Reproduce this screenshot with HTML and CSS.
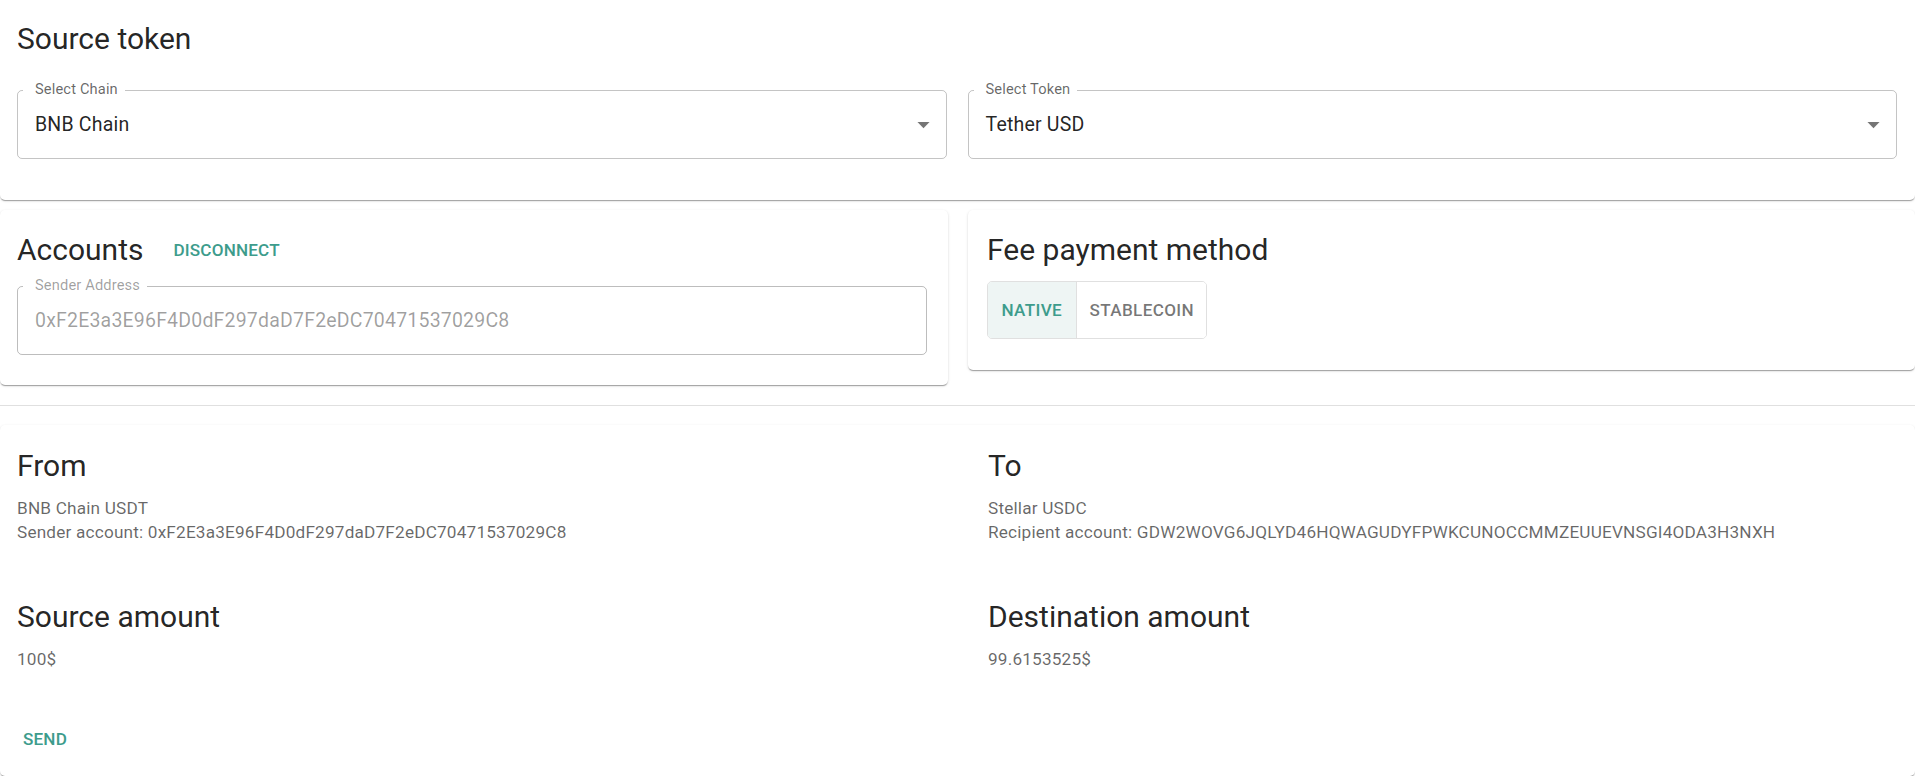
FILE: index.html
```html
<!DOCTYPE html>
<html lang="en">
<head>
<meta charset="utf-8">
<title>Bridge</title>
<link rel="stylesheet" href="styles.css">
</head>
<body>
<div class="page">
  <section class="card card-top">
    <h2 class="h5 title-top">Source token</h2>
    <div class="two-col">
      <div class="field">
        <span class="field-label">Select Chain</span>
        <span class="field-value">BNB Chain</span>
        <svg class="arrow" viewBox="0 0 24 24" width="29" height="29"><path d="M7 10l5 5 5-5z"/></svg>
      </div>
      <div class="field">
        <span class="field-label">Select Token</span>
        <span class="field-value">Tether USD</span>
        <svg class="arrow" viewBox="0 0 24 24" width="29" height="29"><path d="M7 10l5 5 5-5z"/></svg>
      </div>
    </div>
  </section>

  <div class="cards-row">
    <section class="card card-accounts">
      <div class="head-row">
        <h2 class="h5">Accounts</h2>
        <button class="text-btn">Disconnect</button>
      </div>
      <div class="field field-disabled">
        <span class="field-label">Sender Address</span>
        <span class="field-value">0xF2E3a3E96F4D0dF297daD7F2eDC70471537029C8</span>
      </div>
    </section>
    <section class="card card-fee">
      <h2 class="h5">Fee payment method</h2>
      <div class="toggle-group">
        <button class="toggle toggle-selected">Native</button>
        <button class="toggle">Stablecoin</button>
      </div>
    </section>
  </div>

  <hr class="divider">

  <section class="card card-summary">
    <div class="summary-grid">
      <div class="cell cell-left">
        <h2 class="h5 gutter">From</h2>
        <p class="body2">BNB Chain USDT</p>
        <p class="body2">Sender account: 0xF2E3a3E96F4D0dF297daD7F2eDC70471537029C8</p>
      </div>
      <div class="cell cell-right">
        <h2 class="h5 gutter">To</h2>
        <p class="body2">Stellar USDC</p>
        <p class="body2">Recipient account: GDW2WOVG6JQLYD46HQWAGUDYFPWKCUNOCCMMZEUUEVNSGI4ODA3H3NXH</p>
      </div>
      <div class="cell cell-left">
        <h2 class="h5 gutter">Source amount</h2>
        <p class="body2">100$</p>
      </div>
      <div class="cell cell-right">
        <h2 class="h5 gutter">Destination amount</h2>
        <p class="body2">99.6153525$</p>
      </div>
    </div>
    <div class="actions">
      <button class="text-btn">Send</button>
    </div>
  </section>
</div>
</body>
</html>
```

FILE: styles.css
```css
* {
  box-sizing: border-box;
}

html, body {
  margin: 0;
  padding: 0;
  background: #ffffff;
}

body {
  font-family: Roboto, "Liberation Sans", Arial, sans-serif;
  color: rgba(0, 0, 0, 0.87);
  width: 1915px;
}

.page {
  display: flex;
  flex-direction: column;
}

.card {
  background: #ffffff;
  border-radius: 5px;
  box-shadow: 0 2px 1px -1px rgba(0, 0, 0, 0.2), 0 1px 1px 0 rgba(0, 0, 0, 0.14), 0 1px 3px 0 rgba(0, 0, 0, 0.12);
}

.h5 {
  margin: 0;
  font-size: 30px;
  line-height: 39px;
  font-weight: 400;
  letter-spacing: 0;
  color: rgba(0, 0, 0, 0.87);
  white-space: nowrap;
}

/* top card */
.card-top {
  border-radius: 0 0 5px 5px;
  padding: 18.5px 18px 41px 17px;
}

.title-top {
  margin-bottom: 32.5px;
}

.two-col {
  display: grid;
  grid-template-columns: 1fr 1fr;
  column-gap: 21px;
}

/* outlined field */
.field {
  position: relative;
  height: 69px;
  border: 1px solid rgba(0, 0, 0, 0.23);
  border-radius: 5px;
  display: flex;
  align-items: center;
  padding: 0 8px 0 17px;
}

.field-label {
  position: absolute;
  top: -10px;
  left: 5px;
  padding: 0 7px 0 12px;
  background: #ffffff;
  font-size: 14.65px;
  line-height: 17.6px;
  letter-spacing: 0.01em;
  color: rgba(0, 0, 0, 0.6);
  white-space: nowrap;
}

.field-value {
  flex: 1;
  font-size: 19.5px;
  line-height: 28px;
  letter-spacing: 0.01em;
  color: rgba(0, 0, 0, 0.87);
  white-space: nowrap;
}

.arrow {
  flex: none;
  fill: rgba(0, 0, 0, 0.54);
}

.field-disabled {
  border-color: rgba(0, 0, 0, 0.26);
}

.field-disabled .field-label,
.field-disabled .field-value {
  color: rgba(0, 0, 0, 0.38);
}

/* second row */
.cards-row {
  display: grid;
  grid-template-columns: 1fr 1fr;
  column-gap: 20px;
  align-items: start;
  margin-top: 10px;
}

.card-accounts {
  padding: 19.5px 21px 30px 17px;
}

.head-row {
  display: flex;
  align-items: center;
  gap: 20px;
  height: 39px;
  margin-bottom: 17.5px;
}

.text-btn {
  font-family: Roboto, "Liberation Sans", Arial, sans-serif;
  background: transparent;
  border: 0;
  border-radius: 5px;
  padding: 7.3px 10px;
  font-size: 17.1px;
  line-height: 30px;
  font-weight: 500;
  letter-spacing: 0.01em;
  text-transform: uppercase;
  color: #3d9c8c;
  cursor: pointer;
}

.head-row .text-btn {
  margin-top: 2px;
}

.card-fee {
  padding: 19.5px 19.5px 31px 19.5px;
}

.toggle-group {
  display: inline-flex;
  margin-top: 12.5px;
  border: 1px solid rgba(0, 0, 0, 0.12);
  border-radius: 5px;
  overflow: hidden;
}

.toggle {
  font-family: Roboto, "Liberation Sans", Arial, sans-serif;
  height: 56px;
  padding: 0 13.5px;
  border: 0;
  background: #ffffff;
  font-size: 17.1px;
  font-weight: 500;
  letter-spacing: 0.02em;
  text-transform: uppercase;
  color: rgba(0, 0, 0, 0.54);
  cursor: pointer;
}

.toggle + .toggle {
  border-left: 1px solid rgba(0, 0, 0, 0.12);
  padding: 0 12.5px 0 13px;
}

.toggle-selected {
  color: #3d9c8c;
  background: #eef5f4;
}

.divider {
  margin: 20px 0 19px;
  border: 0;
  height: 1px;
  background: rgba(0, 0, 0, 0.12);
}

/* summary */
.card-summary {
  padding: 20.5px 0 14.4px 0;
}

.summary-grid {
  display: grid;
  grid-template-columns: 1fr 1fr;
  column-gap: 20px;
  row-gap: 51.7px;
}

.cell-left {
  padding-left: 17px;
}

.cell-right {
  padding-left: 20.5px;
}

.gutter {
  margin-bottom: 11.5px;
}

.body2 {
  margin: 0;
  font-size: 17.2px;
  line-height: 24.4px;
  letter-spacing: 0.01071em;
  color: rgba(0, 0, 0, 0.6);
  white-space: nowrap;
}

.actions {
  display: flex;
  margin-top: 45.6px;
  padding-left: 13px;
}
```
